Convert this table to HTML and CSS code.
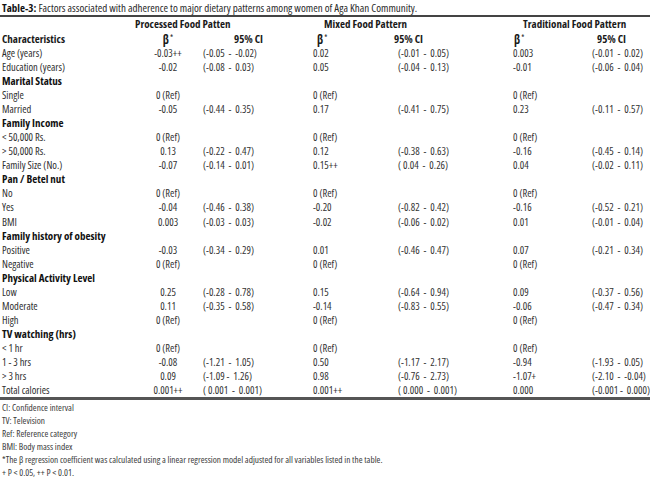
FILE: index.html
```html
<!DOCTYPE html>
<html lang="en">
<head>
<meta charset="utf-8">
<title>Table-3</title>
<link rel="stylesheet" href="styles.css">
</head>
<body>
<div class="page">
  <p class="title"><b>Table-3:</b> Factors associated with adherence to major dietary patterns among women of Aga Khan Community.</p>
  <table class="tbl">
    <colgroup>
      <col class="c-a"><col class="c-b"><col class="c-c"><col class="c-d"><col class="c-e"><col class="c-f"><col class="c-g">
    </colgroup>
    <thead>
      <tr class="grp">
        <th colspan="3" class="g1">Processed Food Patten</th>
        <th colspan="2" class="g2">Mixed Food Pattern</th>
        <th colspan="2" class="g3">Traditional Food Pattern</th>
      </tr>
      <tr class="hdr">
        <th class="lab">Characteristics</th>
        <th class="hb1"><span class="beta">β</span><span class="ast">*</span></th>
        <th class="hc1">95% CI</th>
        <th class="hb2"><span class="beta">β</span><span class="ast">*</span></th>
        <th class="hc2">95% CI</th>
        <th class="hb3"><span class="beta">β</span><span class="ast">*</span></th>
        <th class="hc3">95% CI</th>
      </tr>
    </thead>
    <tbody>
      <tr><td class="lab">Age (years)</td><td class="b1">-0.03++</td><td class="ci1">(-0.05  -  -0.02)</td><td class="b2">0.02</td><td class="ci2">(-0.01  -  0.05)</td><td class="b3">0.003</td><td class="ci3">(-0.01  -  0.02)</td></tr>
      <tr><td class="lab">Education (years)</td><td class="b1">-0.02</td><td class="ci1">(-0.08  -  0.03)</td><td class="b2">0.05</td><td class="ci2">(-0.04  -  0.13)</td><td class="b3">-0.01</td><td class="ci3">(-0.06  -  0.04)</td></tr>
      <tr class="cat"><td class="lab" colspan="7">Marital Status</td></tr>
      <tr><td class="lab">Single</td><td class="b1">0 (Ref)</td><td class="ci1"></td><td class="b2">0 (Ref)</td><td class="ci2"></td><td class="b3">0 (Ref)</td><td class="ci3"></td></tr>
      <tr><td class="lab">Married</td><td class="b1">-0.05</td><td class="ci1">(-0.44  -  0.35)</td><td class="b2">0.17</td><td class="ci2">(-0.41  -  0.75)</td><td class="b3">0.23</td><td class="ci3">(-0.11  -  0.57)</td></tr>
      <tr class="cat"><td class="lab" colspan="7">Family Income</td></tr>
      <tr><td class="lab">&lt; 50,000 Rs.</td><td class="b1">0 (Ref)</td><td class="ci1"></td><td class="b2">0 (Ref)</td><td class="ci2"></td><td class="b3">0 (Ref)</td><td class="ci3"></td></tr>
      <tr><td class="lab">&gt; 50,000 Rs.</td><td class="b1">0.13</td><td class="ci1">(-0.22  -  0.47)</td><td class="b2">0.12</td><td class="ci2">(-0.38  -  0.63)</td><td class="b3">-0.16</td><td class="ci3">(-0.45  -  0.14)</td></tr>
      <tr><td class="lab">Family Size (No.)</td><td class="b1">-0.07</td><td class="ci1">(-0.14  -  0.01)</td><td class="b2">0.15++</td><td class="ci2">( 0.04  -  0.26)</td><td class="b3">0.04</td><td class="ci3">(-0.02  -  0.11)</td></tr>
      <tr class="cat"><td class="lab" colspan="7">Pan / Betel nut</td></tr>
      <tr><td class="lab">No</td><td class="b1">0 (Ref)</td><td class="ci1"></td><td class="b2">0 (Ref)</td><td class="ci2"></td><td class="b3">0 (Ref)</td><td class="ci3"></td></tr>
      <tr><td class="lab">Yes</td><td class="b1">-0.04</td><td class="ci1">(-0.46  -  0.38)</td><td class="b2">-0.20</td><td class="ci2">(-0.82  -  0.42)</td><td class="b3">-0.16</td><td class="ci3">(-0.52  -  0.21)</td></tr>
      <tr class="tall"><td class="lab">BMI</td><td class="b1">0.003</td><td class="ci1">(-0.03  -  0.03)</td><td class="b2">-0.02</td><td class="ci2">(-0.06  -  0.02)</td><td class="b3">0.01</td><td class="ci3">(-0.01  -  0.04)</td></tr>
      <tr class="cat"><td class="lab" colspan="7">Family history of obesity</td></tr>
      <tr><td class="lab">Positive</td><td class="b1">-0.03</td><td class="ci1">(-0.34  -  0.29)</td><td class="b2">0.01</td><td class="ci2">(-0.46  -  0.47)</td><td class="b3">0.07</td><td class="ci3">(-0.21  -  0.34)</td></tr>
      <tr><td class="lab">Negative</td><td class="b1">0 (Ref)</td><td class="ci1"></td><td class="b2">0 (Ref)</td><td class="ci2"></td><td class="b3">0 (Ref)</td><td class="ci3"></td></tr>
      <tr class="cat"><td class="lab" colspan="7">Physical Activity Level</td></tr>
      <tr><td class="lab">Low</td><td class="b1">0.25</td><td class="ci1">(-0.28  -  0.78)</td><td class="b2">0.15</td><td class="ci2">(-0.64  -  0.94)</td><td class="b3">0.09</td><td class="ci3">(-0.37  -  0.56)</td></tr>
      <tr><td class="lab">Moderate</td><td class="b1">0.11</td><td class="ci1">(-0.35  -  0.58)</td><td class="b2">-0.14</td><td class="ci2">(-0.83  -  0.55)</td><td class="b3">-0.06</td><td class="ci3">(-0.47  -  0.34)</td></tr>
      <tr><td class="lab">High</td><td class="b1">0 (Ref)</td><td class="ci1"></td><td class="b2">0 (Ref)</td><td class="ci2"></td><td class="b3">0 (Ref)</td><td class="ci3"></td></tr>
      <tr class="cat"><td class="lab" colspan="7">TV watching (hrs)</td></tr>
      <tr><td class="lab">&lt; 1 hr</td><td class="b1">0 (Ref)</td><td class="ci1"></td><td class="b2">0 (Ref)</td><td class="ci2"></td><td class="b3">0 (Ref)</td><td class="ci3"></td></tr>
      <tr><td class="lab">1 - 3 hrs</td><td class="b1">-0.08</td><td class="ci1">(-1.21  -  1.05)</td><td class="b2">0.50</td><td class="ci2">(-1.17  -  2.17)</td><td class="b3">-0.94</td><td class="ci3">(-1.93  -  0.05)</td></tr>
      <tr><td class="lab">&gt; 3 hrs</td><td class="b1">0.09</td><td class="ci1">(-1.09 -  1.26)</td><td class="b2">0.98</td><td class="ci2">(-0.76  -  2.73)</td><td class="b3">-1.07+</td><td class="ci3">(-2.10  -  -0.04)</td></tr>
      <tr><td class="lab">Total calories</td><td class="b1">0.001++</td><td class="ci1">( 0.001  -  0.001)</td><td class="b2">0.001++</td><td class="ci2">( 0.000  -  0.001)</td><td class="b3">0.000</td><td class="ci3">(-0.001 -  0.000)</td></tr>
    </tbody>
  </table>
  <div class="notes">
    <p>CI: Confidence interval</p>
    <p>TV: Television</p>
    <p>Ref: Reference category</p>
    <p>BMI: Body mass index</p>
    <p>*The β regression coefficient was calculated using a linear regression model adjusted for all variables listed in the table.</p>
    <p>+ P &lt; 0.05, ++ P &lt; 0.01.</p>
  </div>
</div>
</body>
</html>
```

FILE: styles.css
```css
html, body {
  margin: 0;
  padding: 0;
  background: #ffffff;
}

.page {
  width: 650px;
  font-family: "Open Sans", "Liberation Sans Narrow", "DejaVu Sans Condensed", sans-serif;
  font-stretch: 75%;
  color: #333333;
  font-size: 10.5px;
}

.title {
  margin: 0;
  height: 15px;
  line-height: 15px;
  padding-left: 2px;
  white-space: nowrap;
  color: #2a2a2a;
  font-size: 11px;
  font-stretch: 81%;
}

.title b {
  font-weight: bold;
  color: #111111;
}

.tbl {
  width: 650px;
  table-layout: fixed;
  border-collapse: collapse;
  border-top: 2px solid #444444;
  border-bottom: 3px solid #555555;
}

.c-a { width: 150px; }
.c-b { width: 36px; }
.c-c { width: 127px; }
.c-d { width: 77px; }
.c-e { width: 121px; }
.c-f { width: 74px; }
.c-g { width: 65px; }

.tbl th, .tbl td {
  padding: 0;
  white-space: pre;
  overflow: visible;
  text-align: left;
  vertical-align: middle;
  line-height: 12px;
}

.tbl th {
  font-weight: bold;
  color: #1a1a1a;
}

.grp th {
  height: 14px;
  font-size: 11px;
}

.g1 { padding-left: 135px !important; }
.g2 { padding-left: 11px !important; }
.g3 { padding-left: 12px !important; }

.hdr th {
  height: 15px;
  font-size: 11px;
}

.beta {
  font-weight: bold;
  font-size: 12px;
}

.ast {
  font-size: 8px;
  font-weight: normal;
  vertical-align: 3px;
  margin-left: 1px;
}

.hdr .lab { padding-left: 2px; }
.hb1 { text-align: center !important; }
.hc1 { padding-left: 48px !important; }
.hb2 { padding-left: 4px !important; }
.hc2 { padding-left: 4px !important; }
.hb3 { padding-left: 3px !important; }
.hc3 { padding-left: 12px !important; }

.tbl td {
  height: 14px;
}

.tbl td.lab {
  padding-left: 2px;
  color: #2e2e2e;
}

.cat td.lab {
  font-weight: bold;
  font-size: 11px;
  color: #111111;
}

.tall td { height: 15px; }

.b1 { text-align: center !important; }
.ci1 { padding-left: 17px !important; }
.b2 { padding-left: 0; }
.ci2 { padding-left: 8px !important; }
.b3 { padding-left: 2px !important; }
.ci3 { padding-left: 7px !important; }

.notes {
  padding-top: 1px;
  padding-left: 2px;
  font-size: 9.3px;
  color: #3a3a3a;
}

.notes p {
  margin: 0;
  height: 13px;
  line-height: 13px;
  white-space: nowrap;
}
```
